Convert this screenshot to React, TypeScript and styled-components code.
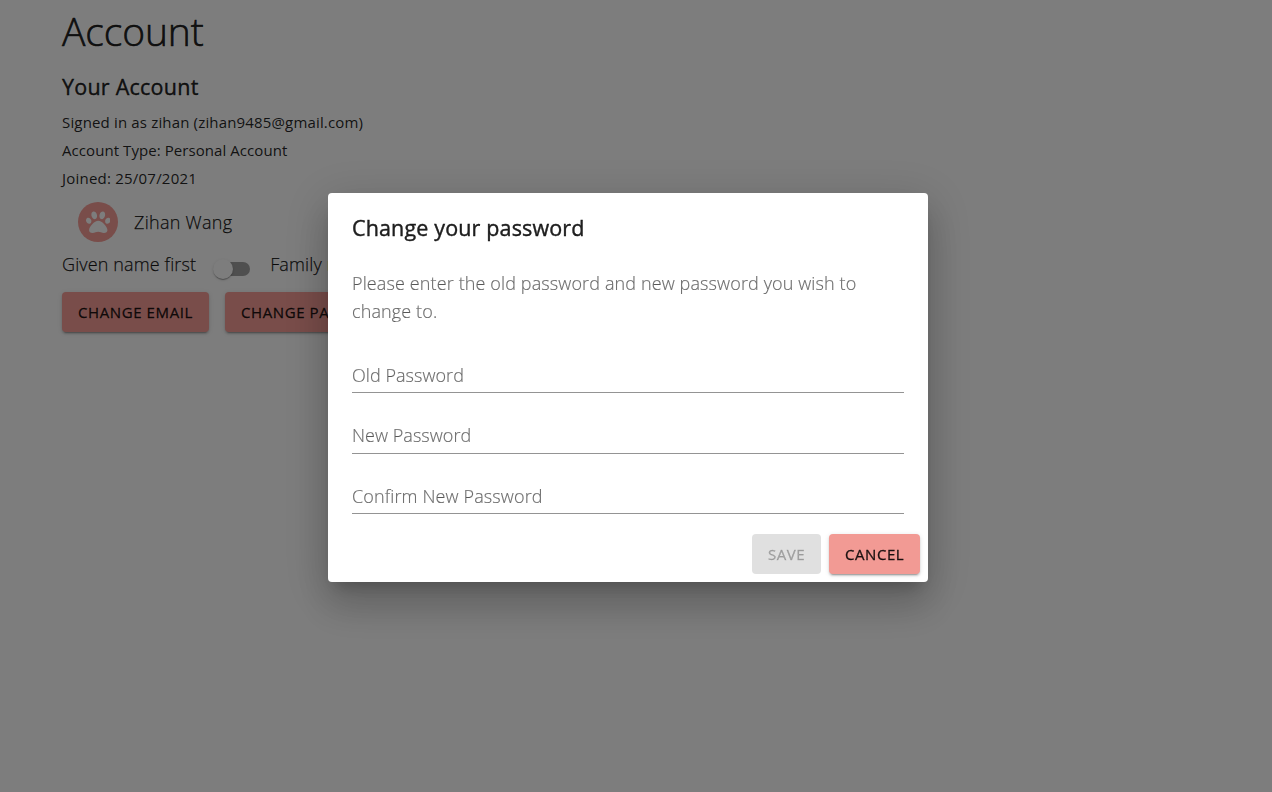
import React from "react";
import styled, { createGlobalStyle } from "styled-components";
import { FaPaw } from "react-icons/fa";

const GlobalStyle = createGlobalStyle`
  * { box-sizing: border-box; }
  body {
    margin: 0;
    background: #fafafa;
    color: rgba(0, 0, 0, 0.87);
    font-family: "Open Sans", "Noto Sans", sans-serif;
    overflow: hidden;
  }
  h1, h2, p { margin: 0; }
`;

const Page = styled.main`
  height: 792px;
  padding: 3px 62px 0;
`;

const PageTitle = styled.h1`
  font-size: 39px;
  line-height: 56px;
  font-weight: 300;
  letter-spacing: -0.1px;
  -webkit-text-stroke: 0.6px currentColor;
`;

const SectionTitle = styled.h2`
  margin-top: 12px;
  font-size: 21.5px;
  line-height: 32px;
  font-weight: 500;
  letter-spacing: 0.24px;
  -webkit-text-stroke: 0.4px currentColor;
`;

const Detail = styled.p<{ $spacing: number }>`
  font-size: 15px;
  line-height: 28px;
  font-weight: 400;
  letter-spacing: ${(p) => p.$spacing}px;
`;

const Details = styled.section`
  padding-top: 5px;
`;

const Profile = styled.div`
  display: flex;
  align-items: center;
  gap: 16px;
  height: 56px;
  padding-left: 16px;
  margin-top: 2px;
`;

const Avatar = styled.span`
  display: flex;
  align-items: center;
  justify-content: center;
  width: 40px;
  height: 40px;
  border-radius: 50%;
  background: #f29a94;
  color: #fafafa;
  font-size: 24.5px;
`;

const Label = styled.span<{ $spacing: number }>`
  font-size: 18px;
  line-height: 28px;
  font-weight: 300;
  letter-spacing: ${(p) => p.$spacing}px;
  white-space: nowrap;
  -webkit-text-stroke: 0.25px currentColor;
`;

const NameOrder = styled.div`
  display: flex;
  height: 42px;
`;

const Switch = styled.span`
  display: flex;
  align-items: center;
  flex: none;
  width: 34px;
  height: 14px;
  margin: 12px 20px 0 20px;
  border-radius: 7px;
  background: #9e9e9e;
`;

const Thumb = styled.span`
  flex: none;
  width: 20px;
  height: 20px;
  margin-left: -3px;
  border-radius: 50%;
  background: #fafafa;
  box-shadow: 0 2px 1px -1px rgba(0, 0, 0, 0.2), 0 1px 1px rgba(0, 0, 0, 0.14),
    0 1px 3px rgba(0, 0, 0, 0.12);
`;

const Actions = styled.div`
  display: flex;
  gap: 16px;
`;

const Button = styled.button<{ $width: number; $spacing: number }>`
  width: ${(p) => p.$width}px;
  height: 40px;
  padding: 0 0 0 16px;
  border: 0;
  border-radius: 4px;
  background: #f29a94;
  color: rgba(0, 0, 0, 0.87);
  font: 500 15px/28px "Open Sans", "Noto Sans", sans-serif;
  letter-spacing: ${(p) => p.$spacing}px;
  text-align: left;
  text-transform: uppercase;
  white-space: nowrap;
  -webkit-text-stroke: 0.3px currentColor;
  box-shadow: 0 3px 1px -2px rgba(0, 0, 0, 0.2), 0 2px 2px rgba(0, 0, 0, 0.14),
    0 1px 5px rgba(0, 0, 0, 0.12);

  &:disabled {
    background: #e0e0e0;
    color: rgba(0, 0, 0, 0.26);
    box-shadow: none;
  }
`;

const Backdrop = styled.div`
  position: fixed;
  inset: 0;
  display: flex;
  align-items: flex-start;
  justify-content: center;
  padding: 193px 16px 0 0;
  background: rgba(0, 0, 0, 0.5);
`;

const Dialog = styled.section`
  width: 600px;
  height: 389px;
  padding: 19px 8px 0;
  border-radius: 4px;
  background: #fff;
  box-shadow: 0 11px 15px -7px rgba(0, 0, 0, 0.2),
    0 24px 38px 3px rgba(0, 0, 0, 0.14), 0 9px 46px 8px rgba(0, 0, 0, 0.12);
`;

const DialogTitle = styled.h2`
  padding: 0 16px;
  font-size: 21.5px;
  line-height: 32px;
  font-weight: 500;
  letter-spacing: 0.15px;
  -webkit-text-stroke: 0.4px currentColor;
`;

const Message = styled.p`
  padding: 0 16px;
  margin-top: 25px;
  color: rgba(0, 0, 0, 0.54);
  font-size: 18px;
  line-height: 28px;
  font-weight: 300;
  letter-spacing: 0.12px;
  -webkit-text-stroke: 0.2px currentColor;
`;

const Fields = styled.div`
  display: flex;
  flex-direction: column;
  padding: 7.5px 16px 0;
`;

const Field = styled.label<{ $spacing: number }>`
  display: flex;
  align-items: flex-end;
  height: 60.5px;
  padding-bottom: 3.5px;
  border-bottom: 1px solid #949494;
  color: rgba(0, 0, 0, 0.54);
  font-size: 18px;
  line-height: 28px;
  font-weight: 300;
  letter-spacing: ${(p) => p.$spacing}px;
  -webkit-text-stroke: 0.2px currentColor;
`;

const DialogActions = styled.div`
  display: flex;
  justify-content: flex-end;
  gap: 8px;
  padding-top: 20px;
`;

export default function App() {
  return (
    <>
      <GlobalStyle />
      <Page>
        <PageTitle>Account</PageTitle>
        <SectionTitle>Your Account</SectionTitle>
        <Details>
          <Detail $spacing={0.16}>Signed in as zihan (zihan9485@gmail.com)</Detail>
          <Detail $spacing={0.07}>Account Type: Personal Account</Detail>
          <Detail $spacing={0.22}>Joined: 25/07/2021</Detail>
        </Details>
        <Profile>
          <Avatar>
            <FaPaw />
          </Avatar>
          <Label $spacing={0.28}>Zihan Wang</Label>
        </Profile>
        <NameOrder>
          <Label $spacing={0.13}>Given name first</Label>
          <Switch>
            <Thumb />
          </Switch>
          <Label $spacing={0.15}>Family name first</Label>
        </NameOrder>
        <Actions>
          <Button $width={147} $spacing={0.6}>Change Email</Button>
          <Button $width={188} $spacing={0.6}>Change Password</Button>
        </Actions>
      </Page>
      <Backdrop>
        <Dialog role="dialog" aria-modal="true">
          <DialogTitle>Change your password</DialogTitle>
          <Message>
            Please enter the old password and new password you wish to
            <br />
            change to.
          </Message>
          <Fields>
            <Field $spacing={0.05}>Old Password</Field>
            <Field $spacing={0.05}>New Password</Field>
            <Field $spacing={0.13}>Confirm New Password</Field>
          </Fields>
          <DialogActions>
            <Button $width={69} $spacing={0.55} disabled>
              Save
            </Button>
            <Button $width={91} $spacing={0.55}>Cancel</Button>
          </DialogActions>
        </Dialog>
      </Backdrop>
    </>
  );
}
